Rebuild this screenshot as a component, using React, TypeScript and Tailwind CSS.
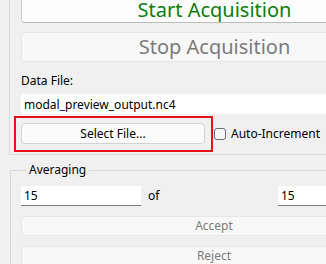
import React, { useState } from 'react';

const font = { fontFamily: '"Noto Sans", "Open Sans", sans-serif' };

const App: React.FC = () => {
  const [fileName, setFileName] = useState<string>('modal_preview_output.nc4');
  const [current, setCurrent] = useState<string>('15');
  const [total, setTotal] = useState<string>('15');
  const [autoIncrement, setAutoIncrement] = useState<boolean>(false);

  return (
    <div className="w-[326px] h-[264px] overflow-hidden bg-[#f0f0f0] text-black" style={font}>
      <div className="w-[420px] -mt-[4px] pl-[9px]">
        {/* acquisition group, top edge scrolled out of view */}
        <div className="border-l border-b border-[#dadada] pl-[11px] pr-[12px] pb-[2px]">
          <button className="w-full h-[27px] bg-[#fdfdfd] border border-[#d0d0d0] border-b-[#bcbcbc] rounded-[4px] text-[20px] leading-none text-[#0b7d0b] flex items-center justify-center">
            Start Acquisition
          </button>
          <button
            disabled
            className="mt-[9px] w-full h-[30px] bg-[#f8f8f8] border border-[#e6e6e6] rounded-[4px] text-[20px] leading-none text-[#7b7b7b] flex items-center justify-center"
          >
            Stop Acquisition
          </button>
          <div className="mt-[9px] h-[20px] text-[12px] leading-[20px]">Data File:</div>
          <input
            value={fileName}
            onChange={(e) => setFileName(e.target.value)}
            className="mt-[3px] block w-full h-[20px] bg-white px-[3px] text-[12px] outline-none"
          />
          <div className="mt-[2px] flex items-center">
            <div className="-ml-[7px] w-[199px] h-[36px] border-2 border-[#e8121b] pl-[5px] pt-[5px]">
              <button className="w-[184px] h-[21px] bg-[#fbfbfb] border border-[#d2d2d2] rounded-[4px] text-[12px] leading-none flex items-center justify-center">
                Select File...
              </button>
            </div>
            <label className="ml-[1px] flex items-center gap-[5px] text-[12px]">
              <input
                type="checkbox"
                checked={autoIncrement}
                onChange={(e) => setAutoIncrement(e.target.checked)}
                className="appearance-none w-[12px] h-[12px] border border-[#6f6f6f] rounded-[3px] bg-[#f6f6f6]"
              />
              Auto-Increment
            </label>
          </div>
        </div>

        <fieldset className="mt-[7px] ml-[1px] border border-[#dadada] pl-[10px] pr-[12px] pb-[10px]">
          <legend className="ml-[5px] px-[3px] text-[12px] leading-[16px]">Averaging</legend>
          <div className="mt-[8px] flex items-center">
            <input
              value={current}
              onChange={(e) => setCurrent(e.target.value)}
              className="w-[120px] h-[20px] bg-white border-b border-[#7c7c7c] px-[3px] text-[12px] outline-none"
            />
            <span className="ml-[7px] w-[130px] text-[12px]">of</span>
            <input
              value={total}
              onChange={(e) => setTotal(e.target.value)}
              className="w-[120px] h-[20px] bg-white border-b border-[#7c7c7c] px-[3px] text-[12px] outline-none"
            />
          </div>
          <button
            disabled
            className="mt-[10px] w-full h-[20px] bg-[#f8f8f8] border border-[#e6e6e6] rounded-[4px] text-[12px] leading-none text-[#7b7b7b] flex items-center justify-center"
          >
            Accept
          </button>
          <button
            disabled
            className="mt-[10px] w-full h-[20px] bg-[#f8f8f8] border border-[#e6e6e6] rounded-[4px] text-[12px] leading-none text-[#7b7b7b] flex items-center justify-center"
          >
            Reject
          </button>
        </fieldset>
      </div>
    </div>
  );
};

export default App;
